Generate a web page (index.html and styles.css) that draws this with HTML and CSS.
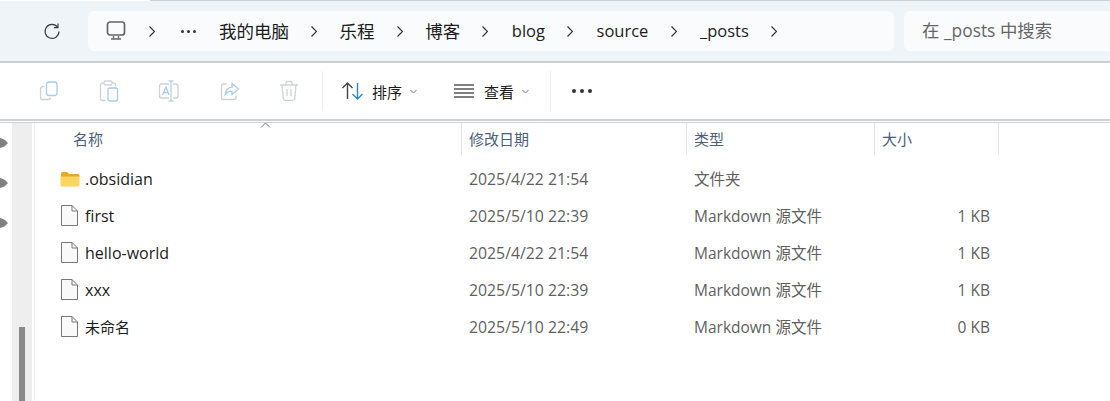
FILE: index.html
```html
<!DOCTYPE html>
<html lang="zh-CN">

<head>
    <meta charset="UTF-8">
    <title>_posts</title>
    <link rel="stylesheet" href="styles.css">
</head>

<body>
    <div class="strip"></div>
    <div class="topbar">
        <div class="refresh">
            <svg width="20" height="20" viewBox="0 0 20 20" fill="none" stroke="#3c3c3c" stroke-width="1.2">
                <path d="M15.6 6.2A7 7 0 1 0 17 10.6" />
                <path d="M16 2.5V6.6H11.9" />
            </svg>
        </div>
        <div class="address">
            <svg class="pc" width="22" height="22" viewBox="0 0 22 22" fill="none" stroke="#666" stroke-width="1.7">
                <rect x="2.5" y="2" width="17" height="13" rx="2.5" />
                <path d="M8.5 16v2.6M13.5 16v2.6M6 19h10" stroke-width="1.3" />
            </svg>
            <svg class="sep first-sep" width="6" height="11" viewBox="0 0 6 11" fill="none" stroke="#333" stroke-width="1.2"><path d="M.5 .5l5 5-5 5" /></svg>
            <div class="more"><i></i><i></i><i></i></div>
            <span class="crumb">我的电脑</span>
            <svg class="sep" width="6" height="11" viewBox="0 0 6 11" fill="none" stroke="#333" stroke-width="1.2"><path d="M.5 .5l5 5-5 5" /></svg>
            <span class="crumb">乐程</span>
            <svg class="sep" width="6" height="11" viewBox="0 0 6 11" fill="none" stroke="#333" stroke-width="1.2"><path d="M.5 .5l5 5-5 5" /></svg>
            <span class="crumb">博客</span>
            <svg class="sep" width="6" height="11" viewBox="0 0 6 11" fill="none" stroke="#333" stroke-width="1.2"><path d="M.5 .5l5 5-5 5" /></svg>
            <span class="crumb latin">blog</span>
            <svg class="sep" width="6" height="11" viewBox="0 0 6 11" fill="none" stroke="#333" stroke-width="1.2"><path d="M.5 .5l5 5-5 5" /></svg>
            <span class="crumb latin">source</span>
            <svg class="sep" width="6" height="11" viewBox="0 0 6 11" fill="none" stroke="#333" stroke-width="1.2"><path d="M.5 .5l5 5-5 5" /></svg>
            <span class="crumb latin">_posts</span>
            <svg class="sep" width="6" height="11" viewBox="0 0 6 11" fill="none" stroke="#333" stroke-width="1.2"><path d="M.5 .5l5 5-5 5" /></svg>
        </div>
        <div class="search">在 _posts 中搜索</div>
    </div>

    <div class="toolbar">
        <div class="tool-group">
            <svg class="tool" width="20" height="22" viewBox="0 0 20 22" fill="none" stroke-width="1.3">
                <path d="M5.5 6.5H4A2.5 2.5 0 0 0 1.5 9v8A2.5 2.5 0 0 0 4 19.5h5a2.5 2.5 0 0 0 2.5-2" stroke="#cfd2d4" />
                <rect x="7.5" y="2" width="10.5" height="13.5" rx="2.5" stroke="#a9cde8" />
            </svg>
            <svg class="tool" width="20" height="24" viewBox="0 0 20 24" fill="none" stroke-width="1.3">
                <path d="M5 4H3.5A2 2 0 0 0 1.5 6v13.5a2 2 0 0 0 2 2h3" stroke="#cfd2d4" />
                <path d="M13 4h1.5a2 2 0 0 1 2 2v1.5" stroke="#cfd2d4" />
                <rect x="5" y="2" width="8" height="4" rx="1.5" stroke="#cfd2d4" />
                <rect x="9" y="9" width="9.5" height="13" rx="2" stroke="#a9cde8" />
            </svg>
            <svg class="tool" width="22" height="22" viewBox="0 0 22 22" fill="none" stroke-width="1.3">
                <path d="M11 4H3.5a2 2 0 0 0-2 2v10a2 2 0 0 0 2 2H11" stroke="#cfd2d4" />
                <path d="M15 4h3a2 2 0 0 1 2 2v10a2 2 0 0 1-2 2h-3" stroke="#cfd2d4" />
                <path d="M4.5 15 8 7l3 8M5.7 12.5h4.6" stroke="#a9cde8" />
                <path d="M13 1v20M10.5 1h5M10.5 21h5" stroke="#b9d3e6" />
            </svg>
            <svg class="tool" width="20" height="20" viewBox="0 0 20 20" fill="none" stroke-width="1.3">
                <path d="M6.5 3H3.5a2 2 0 0 0-2 2v11.5a2 2 0 0 0 2 2H14a2 2 0 0 0 2-2v-2" stroke="#cfd2d4" />
                <path d="M12 2.5 18.5 8 12 13.5v-3.3c-3 0-5 .8-6.8 3.3.4-4 2.8-7 6.8-7.3z" stroke="#a9cde8" />
            </svg>
            <svg class="tool" width="20" height="22" viewBox="0 0 20 22" fill="none" stroke="#cfd2d4" stroke-width="1.3">
                <path d="M1 5h18M7 5V3a1.5 1.5 0 0 1 1.5-1.5h3A1.5 1.5 0 0 1 13 3v2" />
                <path d="M3 5l1.2 13.5a2 2 0 0 0 2 1.8h7.6a2 2 0 0 0 2-1.8L17 5" />
                <path d="M8 9v7M12 9v7" />
            </svg>
        </div>
        <div class="divider"></div>
        <div class="menu-btn menu-sort">
            <svg width="24" height="20" viewBox="0 0 24 20" fill="none" stroke-width="1.4">
                <path d="M6.5 18V2M1.5 7l5-5 5 5" stroke="#444" />
                <path d="M16.5 2v16M11.5 13l5 5 5-5" stroke="#2f84c6" />
            </svg>
            <span>排序</span>
            <svg class="caret" width="7" height="5" viewBox="0 0 7 5" fill="none" stroke="#777"><path d="M.5 1l3 3 3-3" /></svg>
        </div>
        <div class="menu-btn menu-view">
            <svg width="20" height="14" viewBox="0 0 20 14" fill="none" stroke="#555" stroke-width="1.3">
                <path d="M0 1h20M0 5h20M0 9h20M0 13h20" />
            </svg>
            <span>查看</span>
            <svg class="caret" width="7" height="5" viewBox="0 0 7 5" fill="none" stroke="#777"><path d="M.5 1l3 3 3-3" /></svg>
        </div>
        <div class="divider divider-2"></div>
        <div class="dots"><i></i><i></i><i></i></div>
    </div>

    <div class="main">
        <div class="nav">
            <div class="pins">
                <svg width="8" height="12" viewBox="0 0 8 12"><path d="M0 1l3 1 2 1 3 3-3 3-2 1-3 1z" fill="#808080" /></svg>
                <svg width="8" height="12" viewBox="0 0 8 12"><path d="M0 1l3 1 2 1 3 3-3 3-2 1-3 1z" fill="#808080" /></svg>
                <svg width="8" height="12" viewBox="0 0 8 12"><path d="M0 1l3 1 2 1 3 3-3 3-2 1-3 1z" fill="#808080" /></svg>
            </div>
            <div class="track"><div class="thumb"></div></div>
        </div>

        <div class="files">
            <div class="row head">
                <div class="cell name-head">名称<svg class="sort-arrow" width="11" height="6" viewBox="0 0 11 6" fill="none" stroke="#777"><path d="M1 5.5 5.5 1 10 5.5" /></svg></div>
                <div class="cell">修改日期</div>
                <div class="cell">类型</div>
                <div class="cell">大小</div>
            </div>

            <div class="row item">
                <div class="name">
                    <svg class="icon" width="20" height="16" viewBox="0 0 20 16">
                        <path d="M1 2.5A1.5 1.5 0 0 1 2.5 1H7l2 2h9a1.5 1.5 0 0 1 1.5 1.5V6H1z" fill="#e3a92f" />
                        <path d="M.5 5.5h19V14a1.500 1.500 0 0 1-1.500 1.500H2A1.500 1.500 0 0 1 .5 14z" fill="#fbd65f" />
                    </svg>
                    .obsidian
                </div>
                <div class="date">2025/4/22 21:54</div>
                <div class="type">文件夹</div>
                <div class="size"></div>
            </div>
            <div class="row item">
                <div class="name">
                    <svg class="icon file-icon" width="17" height="21" viewBox="0 0 17 21" fill="#f9f9f9" stroke="#777"><path d="M.5 .5H11L16.5 6v14.500H.5zM11 .5V6h5.500" /></svg>
                    first
                </div>
                <div class="date">2025/5/10 22:39</div>
                <div class="type">Markdown 源文件</div>
                <div class="size">1 KB</div>
            </div>
            <div class="row item">
                <div class="name">
                    <svg class="icon file-icon" width="17" height="21" viewBox="0 0 17 21" fill="#f9f9f9" stroke="#777"><path d="M.5 .5H11L16.5 6v14.500H.5zM11 .5V6h5.500" /></svg>
                    hello-world
                </div>
                <div class="date">2025/4/22 21:54</div>
                <div class="type">Markdown 源文件</div>
                <div class="size">1 KB</div>
            </div>
            <div class="row item">
                <div class="name">
                    <svg class="icon file-icon" width="17" height="21" viewBox="0 0 17 21" fill="#f9f9f9" stroke="#777"><path d="M.5 .5H11L16.5 6v14.500H.5zM11 .5V6h5.500" /></svg>
                    xxx
                </div>
                <div class="date">2025/5/10 22:39</div>
                <div class="type">Markdown 源文件</div>
                <div class="size">1 KB</div>
            </div>
            <div class="row item">
                <div class="name name-cjk">
                    <svg class="icon file-icon" width="17" height="21" viewBox="0 0 17 21" fill="#f9f9f9" stroke="#777"><path d="M.5 .5H11L16.5 6v14.500H.5zM11 .5V6h5.500" /></svg>
                    未命名
                </div>
                <div class="date">2025/5/10 22:49</div>
                <div class="type">Markdown 源文件</div>
                <div class="size">0 KB</div>
            </div>
        </div>
    </div>
</body>

</html>
```

FILE: styles.css
```css
* {
    box-sizing: border-box;
}

html,
body {
    height: 100%;
}

body {
    margin: 0;
    width: 1110px;
    height: 401px;
    overflow: hidden;
    display: flex;
    flex-direction: column;
    background-color: #fff;
    color: #1c1c1c;
    font-family: "Open Sans", "Noto Sans CJK SC", sans-serif;
    font-size: 15px;
}

svg {
    display: block;
    flex: none;
}

.strip {
    flex: none;
    height: 1px;
    margin-left: 150px;
    background-color: #c9cfd3;
}

.topbar {
    flex: none;
    height: 62px;
    display: flex;
    align-items: center;
    padding: 0 0 0 42px;
    background-color: #eff4f8;
    border-bottom: 2px solid #c9cfd3;
}

.refresh {
    width: 46px;
}

.address {
    width: 806px;
    height: 40px;
    display: flex;
    align-items: center;
    padding-left: 17px;
    background-color: #f9fbfd;
    border-radius: 6px;
    font-size: 17.5px;
}

.search {
    width: 206px;
    height: 40px;
    margin-left: 10px;
    padding-left: 18px;
    line-height: 38px;
    background-color: #f9fbfd;
    border-radius: 6px 0 0 6px;
    color: #666;
    font-size: 17.4px;
}

.sep {
    margin: 0 22.3px;
}

.first-sep {
    margin: 0 26px 0 22px;
}

.more {
    display: flex;
    gap: 3px;
    margin-right: 23px;
}

.more i {
    width: 3px;
    height: 3px;
    border-radius: 50%;
    background-color: #333;
}

.crumb {
    margin-top: -2px;
}

.crumb.latin {
    padding-left: 1px;
    font-size: 16.5px;
}

.toolbar {
    flex: none;
    height: 58px;
    display: flex;
    align-items: center;
    padding-left: 39px;
    border-bottom: 2px solid #cfd2d4;
}

.tool-group {
    width: 260px;
    display: flex;
    align-items: center;
    justify-content: space-between;
}

.divider {
    width: 1px;
    height: 40px;
    margin-left: 23px;
    background-color: #eee;
}

.divider-2 {
    margin-left: 21px;
}

.menu-btn {
    display: flex;
    align-items: center;
    font-size: 15px;
}

.menu-sort {
    margin-left: 18px;
}

.menu-sort span {
    margin-left: 7px;
}

.menu-view {
    margin-left: 37px;
}

.menu-view span {
    margin-left: 10px;
}

.caret {
    margin-left: 8px;
}

.dots {
    display: flex;
    gap: 4px;
    margin-left: 21px;
}

.dots i {
    width: 4px;
    height: 4px;
    border-radius: 50%;
    background-color: #333;
}

.main {
    flex: 1;
    display: flex;
    margin-top: 1px;
    border-top: 1px solid #cfd2d4;
    min-height: 0;
}

.nav {
    width: 35px;
    display: flex;
    border-right: 1px solid #f0f0f0;
}

.pins {
    width: 12px;
    padding-top: 14px;
    display: flex;
    flex-direction: column;
    gap: 28px;
}

.track {
    width: 20px;
    display: flex;
    flex-direction: column;
    justify-content: flex-end;
    align-items: center;
    background-color: #eeeeee;
}

.thumb {
    width: 6px;
    height: 74px;
    background-color: #8a8a8a;
}

.files {
    flex: 1;
}

.row {
    display: grid;
    grid-template-columns: 426px 225px 188px 125px;
}

.head {
    height: 32px;
    color: #4c607a;
    font-size: 15px;
}

.cell {
    padding-left: 7px;
    line-height: 32px;
    border-left: 1px solid #e5e5e5;
}

.cell:last-child {
    border-right: 1px solid #e5e5e5;
}

.name-head {
    position: relative;
    padding-left: 38px;
    border-left: none;
}

.sort-arrow {
    position: absolute;
    left: 225px;
    top: -1px;
}

.item {
    height: 37px;
    align-items: center;
}

.head + .item {
    margin-top: 5px;
}

.name {
    display: flex;
    align-items: center;
    padding-left: 25px;
    font-size: 16px;
}

.name-cjk {
    font-size: 15px;
}

.icon {
    margin-right: 5px;
}

.file-icon {
    margin: 0 7px 0 1px;
}

.date,
.type,
.size {
    color: #5f5f5f;
    font-size: 15.5px;
}

.date {
    padding-left: 8px;
    font-size: 15.8px;
}

.type {
    padding-left: 8px;
}

.size {
    padding-right: 9px;
    text-align: right;
}
```
